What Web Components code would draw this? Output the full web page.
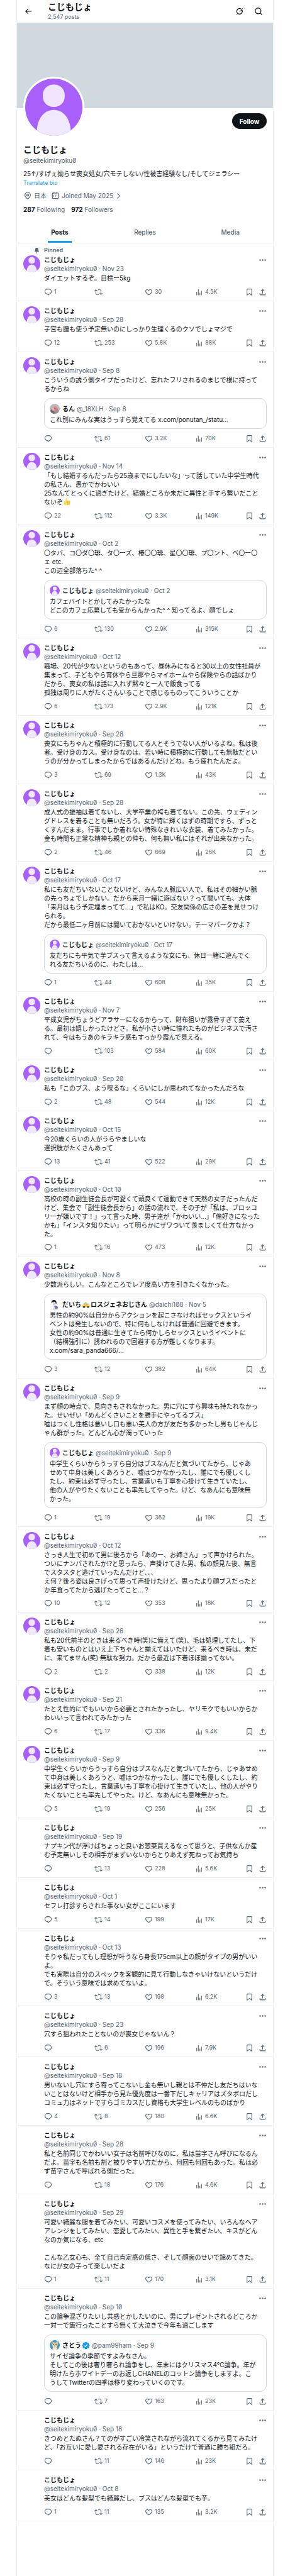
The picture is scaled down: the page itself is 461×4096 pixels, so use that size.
<!DOCTYPE html>
<html lang="ja">
<head>
<meta charset="utf-8">
<meta name="viewport" content="width=device-width, initial-scale=1">
<title>こじもじょ (@seitekimiryoku0)</title>
<style>
  :root {
    --ink: #0f1419;
    --muted: #536471;
    --line: #eff3f4;
    --edge: #cfd9de;
    --blue: #1d9bf0;
  }
  body {
    margin: 0;
    background: #fff;
    color: var(--ink);
    font: 400 10px/14px Inter, "Noto Sans CJK JP", sans-serif;
  }
</style>
</head>
<body>
<profile-page></profile-page>

<script>
const ICONS = {
  reply: '<path fill="none" stroke="currentColor" stroke-width="2" stroke-linejoin="round" d="M11.6 20.6v-2.9h-1.2C6 17.7 2.6 14.3 2.6 10.3 2.6 6.2 5.9 3 10 3h4c4.1 0 7.4 3.2 7.400 7.300 0 2.700-1.400 5-3.600 6.400z"/>',
  repost: '<path d="M4.5 3.88l4.432 4.14-1.364 1.46L5.5 7.55V16c0 1.1.896 2 2 2H13v2H7.5c-2.209 0-4-1.79-4-4V7.55L1.432 9.48.068 8.02 4.5 3.88zM16.5 6H11V4h5.5c2.209 0 4 1.79 4 4v8.45l2.068-1.93 1.364 1.46-4.432 4.14-4.432-4.14 1.364-1.46 2.068 1.93V8c0-1.1-.896-2-2-2z"/>',
  like: '<path d="M16.697 5.5c-1.222-.06-2.679.51-3.89 2.16l-.805 1.09-.806-1.09C9.984 6.01 8.526 5.44 7.304 5.5c-1.243.07-2.349.78-2.91 1.91-.552 1.12-.633 2.78.479 4.82 1.074 1.97 3.257 4.27 7.129 6.61 3.87-2.34 6.052-4.64 7.126-6.61 1.111-2.04 1.03-3.7.477-4.82-.561-1.13-1.666-1.84-2.908-1.91zm4.187 7.69c-1.351 2.48-4.001 5.12-8.379 7.67l-.503.3-.504-.3c-4.379-2.55-7.029-5.19-8.382-7.67-1.36-2.5-1.41-4.86-.514-6.67.887-1.79 2.647-2.91 4.601-3.01 1.651-.09 3.368.56 4.798 2.01 1.429-1.45 3.146-2.1 4.796-2.01 1.954.1 3.714 1.22 4.601 3.01.896 1.81.846 4.17-.514 6.67z"/>',
  views: '<path d="M8.75 21V3h2v18h-2zM18 21V8.5h2V21h-2zM4 21l.004-10h2L6 21H4zm9.248 0v-7h2v7h-2z"/>',
  bookmark: '<path d="M4 4.5C4 3.12 5.119 2 6.5 2h11C18.881 2 20 3.12 20 4.5v18.44l-8-5.71-8 5.71V4.5zM6.5 4c-.276 0-.5.22-.5.5v14.56l6-4.29 6 4.29V4.5c0-.28-.224-.5-.5-.5h-11z"/>',
  share: '<path d="M12 2.59l5.7 5.7-1.41 1.42L13 6.41V16h-2V6.41l-3.3 3.3-1.41-1.42L12 2.59zM21 15l-.02 3.51c0 1.38-1.12 2.49-2.5 2.49H5.5C4.11 21 3 19.88 3 18.5V15h2v3.5c0 .28.22.5.5.5h12.98c.28 0 .5-.22.5-.5L19 15h2z"/>',
  more: '<circle cx="4.5" cy="12" r="2.2"/><circle cx="12" cy="12" r="2.2"/><circle cx="19.5" cy="12" r="2.2"/>',
  back: '<path d="M7.414 13l5.043 5.04-1.414 1.42L3.586 12l7.457-7.46 1.414 1.42L7.414 11H21v2H7.414z"/>',
  search: '<path fill="none" stroke="currentColor" stroke-width="2.2" d="M10.8 3a7.8 7.8 0 1 0 0 15.6 7.8 7.8 0 0 0 0-15.6zM16.4 16.4 21.5 21.5"/>',
  grok: '<path fill="none" stroke="currentColor" stroke-width="2.2" d="M17.8 7.5a7.6 7.6 0 0 1-9.6 11.2M5.7 16.3A7.6 7.6 0 0 1 16 5.5"/><path d="M22.5 1 9.5 15l7.3-5.4zM1.5 23l5.7-7.2 1.5 1.9z"/>',
  place: '<path d="M12 7c-1.93 0-3.5 1.57-3.5 3.5S10.07 14 12 14s3.5-1.57 3.5-3.5S13.93 7 12 7zm0 5c-.827 0-1.5-.673-1.5-1.5S11.173 9 12 9s1.5.673 1.5 1.5S12.827 12 12 12zm0-10c-4.687 0-8.5 3.813-8.5 8.5 0 5.967 7.621 11.116 7.945 11.332l.555.37.555-.37c.324-.216 7.945-5.365 7.945-11.332C20.5 5.813 16.687 2 12 2zm0 17.77c-1.665-1.241-6.5-5.196-6.5-9.27C5.5 6.916 8.416 4 12 4s6.5 2.916 6.5 6.5c0 4.073-4.835 8.028-6.5 9.27z"/>',
  calendar: '<path d="M7 4V3h2v1h6V3h2v1h1.5C19.89 4 21 5.12 21 6.5v12c0 1.38-1.11 2.5-2.5 2.5h-13C4.12 21 3 19.88 3 18.5v-12C3 5.12 4.12 4 5.5 4H7zm0 2H5.5c-.27 0-.5.22-.5.5v12c0 .28.23.5.5.5h13c.28 0 .5-.22.5-.5v-12c0-.28-.22-.5-.5-.5H17v1h-2V6H9v1H7V6zm0 6h2v-2H7v2zm0 4h2v-2H7v2zm4-4h2v-2h-2v2zm0 4h2v-2h-2v2zm4-4h2v-2h-2v2z"/>',
  chevron: '<path fill="none" stroke="currentColor" stroke-width="2.2" d="M7.5 3.5 16 12l-8.5 8.5"/>',
  pin: '<path d="M7 4.5C7 3.12 8.12 2 9.5 2h5C15.88 2 17 3.12 17 4.5v5.26L20.12 16H13v5l-1 2-1-2v-5H3.88L7 9.76V4.5z"/>',
  verified: '<g fill="#1d9bf0"><circle cx="12" cy="12" r="8.5"/><circle cx="12" cy="4.8" r="3.6"/><circle cx="17.1" cy="6.9" r="3.6"/><circle cx="19.2" cy="12" r="3.6"/><circle cx="17.1" cy="17.1" r="3.6"/><circle cx="12" cy="19.2" r="3.6"/><circle cx="6.9" cy="17.1" r="3.6"/><circle cx="4.8" cy="12" r="3.6"/><circle cx="6.9" cy="6.9" r="3.6"/></g><path fill="none" stroke="#fff" stroke-width="2.2" d="M7.5 12.3l3.2 3.2 5.4-6.6"/>',
  thumb: '<path fill="#ffdb5e" d="M3 12c2.5-.5 4.5-2.5 5.5-5.5.5-1.7.3-4 .8-4.8C10 .6 13 .7 13 4.5c0 2-.6 3.5-.8 4.8H20c2.6 0 2.6 3.2.6 3.5 1.8.5 1.6 3.2-.2 3.5 1.4.6 1 3-.6 3.2 1 .8.5 2.9-1.4 2.9H9c-3 0-3-1-6-1z"/><path fill="none" stroke="#ee9547" stroke-width="1.1" d="M14 12.8h6.6M14 16.3h6.4M14 19.5h5.8M14 10v11"/>',
  taxi: '<path fill="#ffcc4d" d="M1.5 19v-4.5c0-1.5 1-2.5 3-2.8L7.5 7.5H16l4 4.2c2 .3 3 1.3 3 2.8V19z"/><path fill="#55acee" d="M6.5 11.5l2-2.8h2.8v2.8zM12.5 11.5V8.7h3l2.6 2.8z"/><path fill="#f4900c" d="M9.5 5.5H14v2H9.5zM1.5 16.5H23v1.2H1.500z"/><circle cx="6.5" cy="19" r="3" fill="#292f33"/><circle cx="18" cy="19" r="3" fill="#292f33"/><circle cx="6.5" cy="19" r="1.3" fill="#ccd6dd"/><circle cx="18" cy="19" r="1.3" fill="#ccd6dd"/>'
};

const PORTRAITS = {
  person: '<rect width="100" height="100" fill="#a960fb"/><rect x="31" y="10.5" width="38" height="39" rx="18" fill="#f1e5fd"/><path fill="#f0e8fd" d="M20.5 100V90C21.5 70 33 54.6 50 54.6S78.5 70 79.5 90v10z"/>',
  flower: '<rect width="100" height="100" fill="#bdb9b8"/><ellipse cx="30" cy="78" rx="26" ry="24" fill="#77706f"/><ellipse cx="70" cy="80" rx="24" ry="22" fill="#9b9392"/><circle cx="48" cy="38" r="19" fill="#d99aa2"/><circle cx="64" cy="55" r="17" fill="#cf7f8b"/><circle cx="38" cy="56" r="14" fill="#e0b3b6"/><circle cx="51" cy="49" r="8" fill="#b8606e"/>',
  man: '<rect width="100" height="100" fill="#fff"/><path fill="#8072b8" d="M32 100c0-26 10-36 26-36s28 12 28 36z"/><path fill="#ecebf6" d="M30 74l14-6 10 28H34z"/><circle cx="44" cy="42" r="23" fill="#f4efef"/><path fill="#26242b" d="M16 40C14 16 30 5 46 7c18 2 24 18 20 38l-6-2c0-10-4-15-10-18-10 4-22 4-28 3z"/><circle cx="34" cy="44" r="3" fill="#333"/><circle cx="50" cy="44" r="3" fill="#333"/><path stroke="#666" stroke-width="3" fill="none" d="M36 55h12"/>',
  dog: '<rect width="100" height="100" fill="#3d9bcb"/><path fill="#e0c9a0" d="M16 4l26 20h16L84 6l-4 42-8 20 8 32H26l4-34-10-22z"/><path fill="#c99a78" d="M22 14l14 16-10 10zM78 16L64 30l10 10z"/><ellipse cx="50" cy="62" rx="17" ry="15" fill="#f2e6cf"/><circle cx="37" cy="46" r="5.5" fill="#2b201c"/><circle cx="63" cy="46" r="5.5" fill="#2b201c"/><ellipse cx="50" cy="57" rx="6" ry="4.5" fill="#33241f"/><path fill="#f4ecdd" d="M32 80h36v20H32z"/>'
};

const shadow = (host, html) => {
  host.attachShadow({ mode: "open" }).innerHTML = html;
};

/* <x-icon name> : a square glyph that takes the colour of its text; --size sets its side. */
customElements.define("x-icon", class extends HTMLElement {
  connectedCallback() {
    if (this.shadowRoot) return;
    shadow(this, `
      <style>
        :host { display: inline-block; flex: none; width: var(--size, 13px); height: var(--size, 13px); white-space: normal; vertical-align: top; }
        svg { display: block; width: 100%; height: 100%; fill: currentColor; }
      </style>
      <svg viewBox="0 0 24 24" aria-hidden="true">${ICONS[this.getAttribute("name")]}</svg>`);
  }
});

/* <x-avatar kind> : a round portrait, sized by --size. */
customElements.define("x-avatar", class extends HTMLElement {
  connectedCallback() {
    if (this.shadowRoot) return;
    shadow(this, `
      <style>
        :host { display: block; flex: none; box-sizing: border-box; width: var(--size, 27px); height: var(--size, 27px); border-radius: 50%; overflow: hidden; }
        svg { display: block; width: 100%; height: 100%; }
      </style>
      <svg viewBox="0 0 100 100" aria-hidden="true">${PORTRAITS[this.getAttribute("kind") || "person"]}</svg>`);
  }
});

customElements.define("app-bar", class extends HTMLElement {
  connectedCallback() {
    shadow(this, `
      <style>
        :host { display: flex; align-items: center; height: 36px; padding: 0 16px 0 11px; --size: 14px; }
        button { all: unset; display: flex; cursor: pointer; }
        .title { flex: 1; margin-left: 24px; }
        h2 { margin: 0; font-size: 14px; line-height: 18px; font-weight: 700; }
        p { margin: 0; font-size: 9px; line-height: 14px; color: var(--muted); }
        .tools { display: flex; gap: 16px; }
      </style>
      <button type="button" aria-label="Back"><x-icon name="back"></x-icon></button>
      <div class="title"><h2><slot name="name"></slot></h2><p><slot name="count"></slot></p></div>
      <div class="tools">
        <button type="button" aria-label="Profile summary"><x-icon name="grok"></x-icon></button>
        <button type="button" aria-label="Search"><x-icon name="search"></x-icon></button>
      </div>`);
  }
});

customElements.define("profile-head", class extends HTMLElement {
  connectedCallback() {
    shadow(this, `
      <style>
        :host { display: block; }
        .banner { height: 136px; background: var(--edge); }
        .body { padding: 0 10px 11px; }
        .row { display: flex; justify-content: space-between; align-items: flex-start; margin-bottom: 10px; }
        .row x-avatar { --size: 97px; margin-top: -50px; border: 3px solid #fff; background: #fff; }
        .follow { margin-top: 8px; width: 55px; height: 25px; padding: 0; border: 0; border-radius: 13px; background: var(--ink); color: #fff; font: inherit; font-weight: 700; cursor: pointer; }
        h1 { margin: 0; font-size: 14px; line-height: 18px; font-weight: 700; }
        p { margin: 0; }
        .handle { color: var(--muted); margin-top: 1px; font-feature-settings: "zero"; }
        .bio { margin-top: 7px; }
        a { color: inherit; text-decoration: none; }
        .translate { display: block; margin-top: 2px; font-size: 9px; line-height: 12px; color: var(--blue); }
        .facts { display: flex; gap: 7px; margin-top: 7px; color: var(--muted); --size: 14px; }
        .facts > * { display: flex; align-items: center; gap: 3px; }
        .facts x-icon[name="chevron"] { --size: 11px; }
        .counts { display: flex; gap: 10px; margin-top: 8px; color: var(--muted); }
        b { color: var(--ink); }
      </style>
      <div class="banner"></div>
      <div class="body">
        <div class="row"><x-avatar></x-avatar><button class="follow" type="button">Follow</button></div>
        <h1><slot name="name"></slot></h1>
        <p class="handle"><slot name="handle"></slot></p>
        <p class="bio"><slot name="bio"></slot></p>
        <a class="translate" href="#translate">Translate bio</a>
        <div class="facts">
          <span><x-icon name="place"></x-icon>日本</span>
          <a href="#about"><x-icon name="calendar"></x-icon>Joined May 2025<x-icon name="chevron"></x-icon></a>
        </div>
        <div class="counts"><a href="#following"><b>287</b> Following</a><a href="#followers"><b>972</b> Followers</a></div>
      </div>`);
  }
});

customElements.define("profile-tabs", class extends HTMLElement {
  connectedCallback() {
    shadow(this, `
      <style>
        :host { display: block; border-bottom: 1px solid var(--line); }
        nav { display: flex; height: 35px; }
        a { flex: 1; display: flex; justify-content: center; color: var(--muted); text-decoration: none; font-weight: 500; }
        span { display: flex; align-items: center; box-sizing: border-box; padding: 3px 5px 0; border-bottom: 3px solid transparent; }
        a[aria-current] { color: var(--ink); font-weight: 700; }
        a[aria-current] span { border-bottom-color: var(--blue); }
      </style>
      <nav aria-label="Profile">
        <a href="#posts" aria-current="page"><span>Posts</span></a>
        <a href="#replies"><span>Replies</span></a>
        <a href="#media"><span>Media</span></a>
      </nav>`);
  }
});

customElements.define("quote-card", class extends HTMLElement {
  connectedCallback() {
    shadow(this, `
      <style>
        :host { display: block; margin-top: 8px; padding: 8px 8px 7px; border: 1px solid var(--edge); border-radius: 11px; }
        .by { display: flex; align-items: center; gap: 3px; height: 16px; margin-bottom: 2px; white-space: nowrap; color: var(--muted); font-feature-settings: "zero"; }
        x-avatar { --size: 16px; margin-right: 1px; }
        .name { color: var(--ink); font-weight: 700; --size: 13px; }
        .text { white-space: pre; }
      </style>
      <div class="by"><x-avatar kind="${this.getAttribute("kind")}"></x-avatar><span class="name"><slot name="name"></slot></span><slot name="meta"></slot></div>
      <div class="text"><slot></slot></div>`);
  }
});

customElements.define("post-actions", class extends HTMLElement {
  connectedCallback() {
    const n = this.getAttribute("counts").split(",");
    const item = (icon, label, count) =>
      `<button type="button" aria-label="${label}"><x-icon name="${icon}"></x-icon>${count}</button>`;
    shadow(this, `
      <style>
        :host { display: grid; grid-template-columns: repeat(4, 1fr) auto; height: 14px; margin-top: 8px; color: var(--muted); }
        button { all: unset; display: flex; align-items: center; gap: 3px; font-size: 9px; line-height: 14px; cursor: pointer; }
        .end { display: flex; gap: 8px; }
      </style>
      ${item("reply", "Reply", n[0])}${item("repost", "Repost", n[1])}${item("like", "Like", n[2])}${item("views", "Views", n[3])}
      <div class="end">${item("bookmark", "Bookmark", "")}${item("share", "Share", "")}</div>`);
  }
});

/* <post-card> : slots "date", "quote" and the default slot for the text. */
customElements.define("post-card", class extends HTMLElement {
  connectedCallback() {
    const pinned = this.hasAttribute("pinned");
    shadow(this, `
      <style>
        :host { display: grid; grid-template-columns: 27px minmax(0, 1fr); column-gap: 6px; padding: 8px 10px 7px; border-bottom: 1px solid var(--line); }
        :host([pinned]) { padding-top: 5px; }
        .pin { display: grid; grid-column: 1 / -1; grid-template-columns: subgrid; align-items: center; margin-bottom: 2px; font-size: 9px; line-height: 12px; font-weight: 600; color: var(--muted); --size: 11px; }
        .pin x-icon { justify-self: end; }
        .main { grid-column: 2; }
        .head { display: flex; justify-content: space-between; align-items: center; font-weight: 700; }
        .head button { all: unset; display: flex; color: var(--muted); cursor: pointer; }
        .meta { color: var(--muted); font-feature-settings: "zero"; }
        .text { margin-top: 1px; white-space: pre; }
        :host([long]) post-actions { margin-top: 7px; }
      </style>
      ${pinned ? '<div class="pin"><x-icon name="pin"></x-icon><span>Pinned</span></div>' : ""}
      ${this.hasAttribute("bare") ? "" : "<x-avatar></x-avatar>"}
      <div class="main">
        <div class="head"><span>こじもじょ</span><button type="button" aria-label="More"><x-icon name="more"></x-icon></button></div>
        <div class="meta">@seitekimiryoku0 · <slot name="date"></slot></div>
        <div class="text"><slot></slot></div>
        <slot name="quote"></slot>
        <post-actions counts="${this.getAttribute("counts")}"></post-actions>
      </div>`);
  }
});

const ME = "こじもじょ";
const HANDLE = "@seitekimiryoku0";
const POSTS = [
  { date: "Nov 23", n: "1,,30,4.5K", text: "ダイエットするぞ。目標ー5kg" },
  { date: "Sep 28", n: "12,253,5.8K,88K", text: "子宮も膣も使う予定無いのにしっかり生理くるのクソでしょマジで" },
  { date: "Sep 8", n: ",61,3.2K,70K", text: "こういうの誘う側タイプだったけど、忘れたフリされるのまじで根に持って\nるからね",
    quote: { kind: "flower", name: "るん", meta: "@_18XLH · Sep 8", text: "これ別にみんな実はうっすら覚えてる x.com/ponutan_/statu…" } },
  { date: "Nov 14", n: "22,112,3.3K,149K", text: "「もし結婚するんだったら25歳までにしたいな」って話していた中学生時代\nの私さん、愚かでかわいい\n25なんてとっくに過ぎたけど、結婚どころか未だに異性と手すら繋いだこと\nないぞ{thumb}" },
  { date: "Oct 2", n: "6,130,2.9K,315K", text: "〇タバ、コ〇ダ〇琲、タ〇ーズ、椿〇〇琲、星〇〇琲、プ〇ント、ベ〇ー〇\nェ etc.\nこの辺全部落ちた^ ^",
    quote: { kind: "person", name: ME, meta: HANDLE + " · Oct 2", text: "カフェバイトとかしてみたかったな\nどこのカフェ応募しても受からんかった^ ^ 知ってるよ、顔でしょ" } },
  { date: "Oct 12", n: "6,173,2.9K,121K", text: "職場、20代が少ないというのもあって、昼休みになると30以上の女性社員が\n集まって、子どもやら育休やら旦那やらマイホームやら保険やらの話ばかり\nだから、喪女の私は話に入れず黙々と一人で飯食ってる\n孤独は周りに人がたくさんいることで感じるものってこういうことか" },
  { date: "Sep 28", n: "3,69,1.3K,43K", text: "喪女にもちゃんと積極的に行動してる人とそうでない人がいるよね。私は後\n者。受け身のカス。受け身なのは、若い時に積極的に行動しても無駄だとい\nうのが分かってしまったからではあるんだけどね。もう疲れたんだよ。" },
  { date: "Sep 28", n: "2,46,669,26K", text: "成人式の振袖は着てないし、大学卒業の袴も着てない。この先、ウェディン\nグドレスを着ることも無いだろう。女が特に輝くはずの時期ですら、ずっと\nくすんだまま。行事でしか着れない特殊なきれいな衣装、着てみたかった。\n金も時間も正常な精神も親との仲も、何も無い私にはそれが出来なかった。" },
  { date: "Oct 17", n: "1,44,608,35K", text: "私にも友だちいないことないけど、みんな人脈広い人で、私はその細かい脈\nの先っちょでしかない。だから来月一緒に遊ばない？って聞いても、大体\n「来月はもう予定埋まってて…」で私はKO。交友関係の広さの差を見せつけ\nられる。\nだから最低二ヶ月前には聞いておかないといけない。テーマパークかよ？",
    quote: { kind: "person", name: ME, meta: HANDLE + " · Oct 17", text: "友だちにも平気で芋ブスって言えるような女にも、休日一緒に遊んでく\nれる友だちいるのに、わたしは…" } },
  { date: "Nov 7", n: ",103,584,60K", text: "平成女児がちょうどアラサーになるからって、財布狙いが露骨すぎて萎え\nる。最初は嬉しかったけどさ。私が小さい時に憧れたものがビジネスで汚さ\nれて、今はもうあのキラキラ感もすっかり霞んで見える。" },
  { date: "Sep 20", n: "2,48,544,12K", text: "私も「このブス、よう喋るな」くらいにしか思われてなかったんだろな" },
  { date: "Oct 15", n: "13,41,522,29K", text: "今20歳くらいの人がうらやましいな\n選択肢がたくさんあって" },
  { date: "Oct 10", n: "1,16,473,12K", text: "高校の時の副生徒会長が可愛くて頭良くて運動できて天然の女子だったんだ\nけど、集会で「副生徒会長から」の話の流れで、その子が「私は、ブロッコ\nリーが嫌いです！」って言った時、男子達が「かわいい…」「俺好きになった\nかも」「インスタ知りたい」って明らかにザワついて羨ましくて仕方なかっ\nた。" },
  { date: "Nov 8", n: "3,12,382,64K", text: "少数派らしい。こんなところでレア度高い方を引きたくなかった。",
    quote: { kind: "man", name: "だいち{taxi}ロスジェネおじさん", meta: "@daichi108 · Nov 5", text: "男性の約90%は自分からアクションを起こさなければセックスというイ\nベントは発生しないので、特に何もしなければ普通に回避できます。\n女性の約90%は普通に生きてたら何かしらセックスというイベントに\n（結構強引に）誘われるので回避する方が難しくなります。\nx.com/sara_panda666/…" } },
  { date: "Sep 9", n: "1,19,362,19K", text: "まず顔の時点で、見向きもされなかった。男に穴にすら興味も持たれなかっ\nた。せいぜい「めんどくさいことを勝手にやってるブス」\n嘘はつくし性格は悪いし口も悪い美人の方が友だち多かったし男もじゃんじ\nゃん群がった。どんどん心が濁っていった",
    quote: { kind: "person", name: ME, meta: HANDLE + " · Sep 9", text: "中学生くらいからうっすら自分はブスなんだと気づいてたから、じゃあ\nせめて中身は美しくあろうと、嘘はつかなかったし、誰にでも優しくし\nたし、約束は必ず守ったし、言葉遣いも丁寧を心掛けて生きていたし、\n他の人がやりたくないことも率先してやった。けど、なあんにも意味無\nかった。" } },
  { date: "Oct 12", n: "10,12,353,18K", text: "さっき人生で初めて男に後ろから「あのー、お姉さん」って声かけられた。\nついにナンパされたか!?と思ったら、声掛けてきた男、私の顔見た後、無言\nでスタスタと逃げていったんだけど、、、\nえ何？後ろ姿は良さげって思って声掛けたけど、思ったより顔ブスだったと\nか年食ってたから逃げたってこと…？" },
  { date: "Sep 26", n: "2,2,338,12K", text: "私も20代前半のときは来るべき時(笑)に備えて(笑)、毛は処理してたし、下\n着も安いものとはいえ上下ちゃんと揃えてはいたけど、来るべき時は、未だ\nに、来てません(笑) 無駄な努力。だから最近は下着ほぼ揃ってない。" },
  { date: "Sep 21", n: "6,17,336,9.4K", text: "たとえ性的にでもいいから必要とされたかったし、ヤリモクでもいいからか\nわいいって言われてみたかった" },
  { date: "Sep 9", n: "5,19,256,25K", text: "中学生くらいからうっすら自分はブスなんだと気づいてたから、じゃあせめ\nて中身は美しくあろうと、嘘はつかなかったし、誰にでも優しくしたし、約\n束は必ず守ったし、言葉遣いも丁寧を心掛けて生きていたし、他の人がやり\nたくないことも率先してやった。けど、なあんにも意味無かった。" },
  { date: "Sep 19", n: ",13,228,5.6K", bare: true, text: "ナプキン代が浮けばちょっと良いお惣菜買えるなって思うと、子供なんか産\nむ予定無いしその相手がまずいないからとりあえず死ねってお気持ち" },
  { date: "Oct 1", n: "5,14,199,17K", bare: true, text: "セフレ打診すらされた事ない女がここにいます" },
  { date: "Oct 13", n: "3,13,198,6.2K", bare: true, text: "そりゃ私だってもし理想が叶うなら身長175cm以上の顔がタイプの男がいい\nよ。\nでも実際は自分のスペックを客観的に見て行動しなきゃいけないというだけ\nで。そういう意味では求めてないよ。" },
  { date: "Sep 23", n: ",6,196,7.9K", bare: true, text: "穴すら狙われたことないのが喪女じゃないん？" },
  { date: "Sep 18", n: "4,8,180,6.6K", bare: true, text: "男いないし穴にすら寄ってこないし金も無いし親とは不仲だし友だちはいな\nいことはないけど相手から見た優先度は一番下だしキャリアはズタボロだし\nコミュ力はネットですらゴミカスだし資格も大学生レベルのものばかり" },
  { date: "Sep 28", n: ",18,176,4.6K", bare: true, text: "私と名前同じでかわいい女子は名前呼びなのに、私は苗字さん呼びになるん\nだよ。苗字も名前も割と被りやすい方だから、何回も何回もあった。私は必\nず苗字さんで呼ばれる側だった。" },
  { date: "Sep 29", n: "1,11,170,3.1K", bare: true, text: "可愛い綺麗な服を着てみたい、可愛いコスメを使ってみたい、いろんなヘア\nアレンジをしてみたい、恋愛してみたい、異性と手を繋ぎたい、キスがどん\nなのか気になる、etc\n\nこんな乙女心も、全て自己肯定感の低さ、そして顔面のせいで諦めてきた。\nなにが女の子って楽しいだよ" },
  { date: "Sep 10", n: ",7,163,23K", bare: true, text: "この論争混ざりたいし共感とかしたいのに、男にプレゼントされるどころか\n一対一で飯行ったことすら無くて大泣きで今年も過ごします",
    quote: { kind: "dog", name: "さとう{verified}", meta: "@pam99ham · Sep 9", text: "サイゼ論争の季節ですよみなさん。\nそしてこの後は奢り奢られ論争をし、年末にはクリスマス4°C論争。年が\n明けたらホワイトデーのお返しCHANELのコットン論争をしますよ。こ\nうしてTwitterの四季は移り変わっていくのです。" } },
  { date: "Sep 18", n: ",11,146,23K", bare: true, text: "きつめとたぬさん？てのがすごい冷笑されながら流れてくるから見てみたけ\nど、「お互いに愛し愛される存在がいる」というだけで普通に勝ち組だろ。" },
  { date: "Oct 8", n: "1,11,135,3.2K", bare: true, text: "美女はどんな髪型でも綺麗だし、ブスはどんな髪型でも芋。" }
];

const rich = s => s.replace(/\{(\w+)\}/g, '<x-icon name="$1"></x-icon>');

customElements.define("post-feed", class extends HTMLElement {
  connectedCallback() {
    const card = (p, i) => {
      const long = p.text.split("\n").length > 4;
      const q = p.quote;
      return `<post-card counts="${p.n}"${i === 0 ? " pinned" : ""}${p.bare ? " bare" : ""}${long ? " long" : ""}><time slot="date">${p.date}</time>${rich(p.text)}${
        q ? `<quote-card slot="quote" kind="${q.kind}"><span slot="name" class="name">${rich(q.name)}</span><span slot="meta">${q.meta}</span>${q.text}</quote-card>` : ""
      }</post-card>`;
    };
    shadow(this, `
      <style>
        :host { display: block; }
        .name { display: flex; align-items: center; gap: 1px; }
      </style>
      ${POSTS.map(card).join("")}`);
  }
});

customElements.define("profile-page", class extends HTMLElement {
  connectedCallback() {
    shadow(this, `
      <style>
        :host { display: block; padding: 0 26px; }
        main { box-sizing: border-box; max-width: 600px; min-height: 100vh; margin: 0 auto; border: solid var(--line); border-width: 0 1px; }
      </style>
      <main>
        <app-bar><span slot="name">${ME}</span><span slot="count">2,547 posts</span></app-bar>
        <profile-head>
          <span slot="name">${ME}</span>
          <span slot="handle">${HANDLE}</span>
          <span slot="bio">25↑/すげぇ拗らせ喪女処女/穴モテしない/性被害経験なし/そしてジェラシー</span>
        </profile-head>
        <profile-tabs></profile-tabs>
        <post-feed></post-feed>
      </main>`);
  }
});
</script>
</body>
</html>
